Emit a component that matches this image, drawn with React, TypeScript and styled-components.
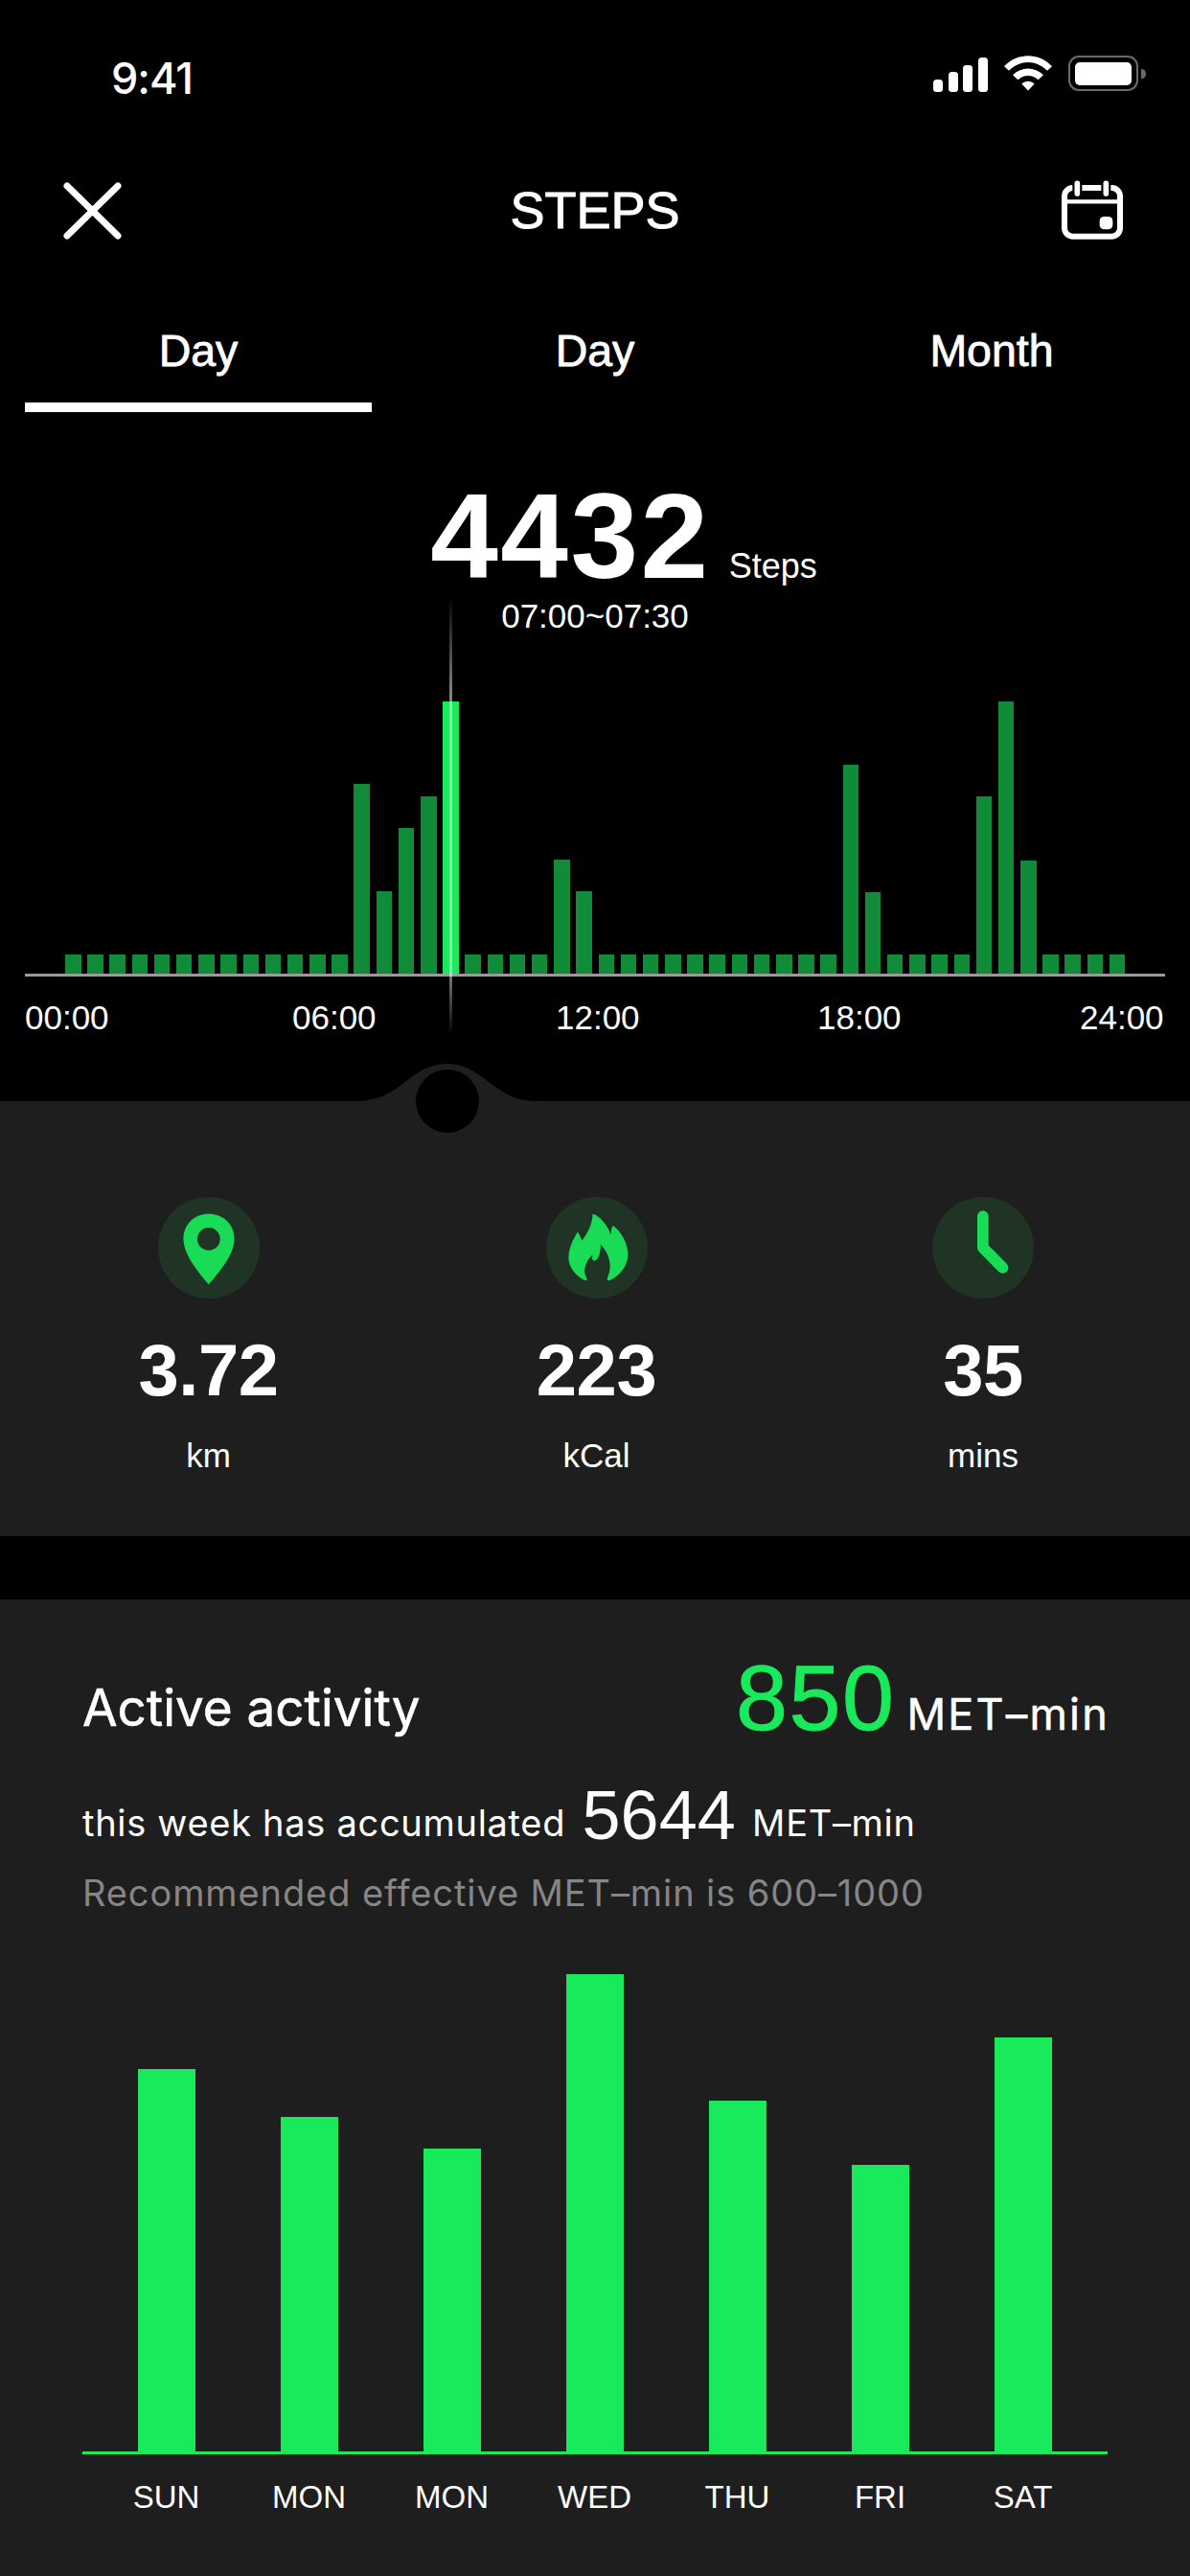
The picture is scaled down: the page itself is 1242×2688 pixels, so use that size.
import styled, { createGlobalStyle } from "styled-components";

const GREEN = "#18ea5b";
const ICON_GREEN = "#19db56";
const PANEL = "#1e1e1e";

// bar heights for the 48 half hour slots, everything else sits at the base height
const BASE_HEIGHT = 20;
const PEAKS: Record<number, number> = {
  13: 198,
  14: 86,
  15: 152,
  16: 185,
  17: 284,
  22: 119,
  23: 86,
  35: 218,
  36: 85,
  41: 185,
  42: 284,
  43: 118,
};
const SELECTED_SLOT = 17;
const daySlots = Array.from({ length: 48 }, (_, i) => PEAKS[i] ?? BASE_HEIGHT);

const weekDays = [
  { label: "SUN", height: 399 },
  { label: "MON", height: 349 },
  { label: "MON", height: 316 },
  { label: "WED", height: 498 },
  { label: "THU", height: 366 },
  { label: "FRI", height: 299 },
  { label: "SAT", height: 432 },
];

const GlobalStyle = createGlobalStyle`
  html, body {
    margin: 0;
    padding: 0;
    background: #000;
  }
  * {
    box-sizing: border-box;
  }
`;

const Screen = styled.div`
  width: 1242px;
  height: 2688px;
  overflow: hidden;
  background: #000;
  color: #fff;
  font-family: "Liberation Sans", Arial, sans-serif;
`;

const StatusBar = styled.div`
  height: 160px;
  padding: 58px 45px 0 116px;
  display: flex;
  justify-content: space-between;
  align-items: flex-start;
`;

const Clock = styled.span`
  font-family: Inter, sans-serif;
  font-size: 45px;
  font-weight: 500;
  line-height: 48px;
  letter-spacing: -1px;
`;

const StatusIcons = styled.div`
  display: flex;
  align-items: flex-start;
  gap: 17px;

  svg {
    display: block;
  }
`;

const Header = styled.header`
  height: 120px;
  padding: 0 71px;
  display: grid;
  grid-template-columns: 1fr auto 1fr;
  align-items: center;
`;

const CloseButton = styled.div`
  margin-left: -5px;
  display: flex;
`;

const CalendarButton = styled.div`
  justify-self: end;
  margin: 0 -2px 3px 0;
  display: flex;
`;

const Title = styled.h1`
  margin: 0 0 2px;
  font-size: 54px;
  font-weight: 400;
  line-height: 60px;
  -webkit-text-stroke: 1px #fff;
`;

const Tabs = styled.nav`
  display: grid;
  grid-template-columns: repeat(3, 414px);
  height: 150px;
`;

const Tab = styled.div`
  display: flex;
  flex-direction: column;
  align-items: center;
  justify-content: flex-end;
`;

const TabLabel = styled.span`
  font-size: 46.5px;
  line-height: 54px;
  -webkit-text-stroke: 0.8px #fff;
`;

const TabMark = styled.span<{ $active: boolean }>`
  width: 362px;
  height: 10px;
  margin-top: 27px;
  background: ${(p) => (p.$active ? "#fff" : "transparent")};
`;

const Summary = styled.section`
  margin-top: 64px;
  display: flex;
  flex-direction: column;
  align-items: center;
`;

const TotalRow = styled.div`
  padding-left: 60px;
  display: flex;
  align-items: baseline;
  gap: 19px;
`;

const Total = styled.span`
  font-size: 127px;
  font-weight: 700;
  line-height: 130px;
  letter-spacing: 2.5px;
`;

const TotalUnit = styled.span`
  font-size: 36px;
  line-height: 40px;
`;

const TimeRange = styled.span`
  margin-top: -1px;
  font-size: 35px;
  line-height: 40px;
`;

const DayChart = styled.section`
  position: relative;
  width: 1190px;
  margin: 69px 0 0 26px;
`;

const DayBars = styled.div`
  height: 287px;
  padding-left: 42px;
  display: flex;
  align-items: flex-end;
  gap: 6.7px;
  border-bottom: 3px solid #9a9a9a;
`;

const DayBar = styled.div<{ $selected: boolean }>`
  width: 16.5px;
  flex-shrink: 0;
  background: ${(p) => (p.$selected ? GREEN : "#108c38")};
`;

const Needle = styled.div`
  position: absolute;
  left: 443px;
  top: -110px;
  width: 3px;
  height: 458px;
  background: linear-gradient(
    to bottom,
    rgba(255, 255, 255, 0) 0%,
    rgba(255, 255, 255, 0.5) 22%,
    rgba(255, 255, 255, 0.55) 78%,
    rgba(255, 255, 255, 0.45) 87%,
    rgba(255, 255, 255, 0) 100%
  );
`;

const AxisLabels = styled.div`
  margin-top: 23px;
  display: grid;
  grid-template-columns: 279px 275px 273px 274px auto;
  font-size: 35px;
  line-height: 40px;
`;

const StatsPanel = styled.section`
  position: relative;
  margin-top: 67px;
  height: 454px;
  padding: 100px 0 0 15px;
  display: grid;
  grid-template-columns: 405px 405px 402px;
  background: ${PANEL};
`;

const Notch = styled.svg`
  position: absolute;
  left: 373px;
  top: -39px;
  display: block;
`;

const Stat = styled.div`
  display: flex;
  flex-direction: column;
  align-items: center;
`;

const StatIcon = styled.div`
  width: 106px;
  height: 106px;
  border-radius: 50%;
  background: #1f3424;

  svg {
    display: block;
  }
`;

const StatValue = styled.div`
  margin-top: 35px;
  font-size: 76px;
  font-weight: 700;
  line-height: 80px;
  letter-spacing: -0.5px;
`;

const StatUnit = styled.div`
  margin-top: 29px;
  font-size: 35px;
  line-height: 40px;
`;

const ActivityPanel = styled.section`
  margin-top: 66px;
  height: 1020px;
  padding: 53px 86px 0;
  background: ${PANEL};
`;

const ActivityHead = styled.div`
  display: flex;
  justify-content: space-between;
  align-items: baseline;
`;

const ActivityTitle = styled.h2`
  align-self: flex-start;
  margin: 28px 0 0;
  font-family: Inter, sans-serif;
  font-size: 53px;
  font-weight: 400;
  line-height: 64px;
  -webkit-text-stroke: 0.6px #fff;
`;

const ActiveValue = styled.div`
  margin-right: -2px;
  display: flex;
  align-items: baseline;
  gap: 12px;
  font-family: Inter, sans-serif;
  font-size: 45px;
  letter-spacing: 2.2px;
  -webkit-text-stroke: 0.5px #fff;
`;

const ActiveNumber = styled.span`
  font-family: "Liberation Sans", Arial, sans-serif;
  font-size: 97px;
  line-height: 100px;
  letter-spacing: 1.5px;
  color: ${GREEN};
  -webkit-text-stroke: 1px ${GREEN};
`;

const WeekLine = styled.p`
  margin: 34px 0 0;
  font-family: Inter, sans-serif;
  font-size: 38px;
  line-height: 76px;
  letter-spacing: 0.7px;
  white-space: nowrap;
`;

const WeekNumber = styled.span`
  margin: 0 6px;
  font-family: "Liberation Sans", Arial, sans-serif;
  font-size: 72px;
  letter-spacing: 0;
  vertical-align: -3px;
`;

const Hint = styled.p`
  margin: 11px 0 0;
  font-family: Inter, sans-serif;
  font-size: 38px;
  line-height: 48px;
  letter-spacing: 0.9px;
  color: #868686;
  white-space: nowrap;
`;

const WeekBars = styled.div`
  margin-top: 61px;
  height: 501px;
  padding-left: 13px;
  display: grid;
  grid-template-columns: repeat(7, 149px);
  align-items: end;
  justify-items: center;
  border-bottom: 3px solid ${GREEN};
`;

const WeekBar = styled.div<{ $height: number }>`
  width: 60px;
  height: ${(p) => p.$height}px;
  background: ${GREEN};
`;

const WeekLabels = styled.div`
  margin-top: 25px;
  padding-left: 13px;
  display: grid;
  grid-template-columns: repeat(7, 149px);
  justify-items: center;
  font-size: 33px;
  line-height: 40px;
`;

function StatusGlyphs() {
  return (
    <StatusIcons>
      <svg width="57" height="37" viewBox="0 0 57 37" fill="#fff" style={{ marginTop: 2 }}>
        <rect x="0" y="23" width="10" height="13" rx="3.5" />
        <rect x="16" y="15" width="10" height="21" rx="3.5" />
        <rect x="31" y="8" width="10" height="28" rx="3.5" />
        <rect x="47" y="0" width="10" height="36" rx="3.5" />
      </svg>
      <svg width="50" height="37" viewBox="0 0 150 110" fill="#fff">
        <path d="M0 33C40-11 110-11 150 33L135 47C100 12 50 12 15 47Z" />
        <path d="M27 60C55 33 95 33 123 60L107 75C88 58 62 58 43 75Z" />
        <path d="M55 88C68 77 82 77 95 88L75 109Z" />
      </svg>
      <svg width="82" height="38" viewBox="0 0 82 38">
        <rect x="1" y="1" width="71" height="35" rx="10" fill="none" stroke="#6a6a6a" strokeWidth="2" />
        <rect x="7" y="7" width="59" height="24" rx="5" fill="#fff" />
        <path d="M76 14c3 0 5 2 5 5s-2 5-5 5z" fill="#6a6a6a" />
      </svg>
    </StatusIcons>
  );
}

function CloseIcon() {
  return (
    <svg width="62" height="60" viewBox="0 0 62 60" fill="none" stroke="#fff" strokeWidth="7" strokeLinecap="round">
      <path d="M4 4l53 52M57 4L4 56" />
    </svg>
  );
}

function CalendarIcon() {
  return (
    <svg width="66" height="63" viewBox="50 33 198 189" fill="none">
      <rect x="62" y="60" width="174" height="152" rx="26" stroke="#fff" strokeWidth="18" />
      <path d="M62 103H236" stroke="#fff" strokeWidth="13" />
      <path d="M102 46V78M192 46V78" stroke="#000" strokeWidth="30" strokeLinecap="round" />
      <path d="M102 46V78M192 46V78" stroke="#fff" strokeWidth="17" strokeLinecap="round" />
      <rect x="172" y="150" width="41" height="40" rx="14" fill="#fff" />
    </svg>
  );
}

function PinIcon() {
  return (
    <svg width="106" height="106" viewBox="45 42 317 317">
      <path
        fill={ICON_GREEN}
        fillRule="evenodd"
        d="M203 94C159 94 124 128 124 172C124 222 170 276 203 315C236 276 283 222 283 172C283 128 247 94 203 94ZM203 138A35.500 35.500 0 1 1 203 209A35.500 35.500 0 1 1 203 138Z"
      />
    </svg>
  );
}

function FlameIcon() {
  return (
    <svg width="106" height="106" viewBox="45 42 317 317">
      <path
        fill={ICON_GREEN}
        d="M190 95C205 96 235 125 247 160C248 145 250 135 254 132C280 150 302 190 300 225C298 265 265 295 240 303C235 303 235 297 237 292C250 265 248 225 215 190C216 210 210 238 195 241C188 241 188 230 190 222C175 235 160 260 167 285C170 293 176 303 170 303C145 295 115 265 115 232C115 205 128 175 143 152C148 155 152 168 157 178C175 155 190 125 190 95Z"
      />
    </svg>
  );
}

function TimeIcon() {
  return (
    <svg width="106" height="106" viewBox="41 42 317 317" fill="none">
      <path d="M199 102V200L261 263" stroke={ICON_GREEN} strokeWidth="35" strokeLinecap="round" strokeLinejoin="round" />
    </svg>
  );
}

export default function App() {
  return (
    <Screen>
      <GlobalStyle />
      <StatusBar>
        <Clock>9:41</Clock>
        <StatusGlyphs />
      </StatusBar>

      <Header>
        <CloseButton>
          <CloseIcon />
        </CloseButton>
        <Title>STEPS</Title>
        <CalendarButton>
          <CalendarIcon />
        </CalendarButton>
      </Header>

      <Tabs>
        <Tab>
          <TabLabel>Day</TabLabel>
          <TabMark $active />
        </Tab>
        <Tab>
          <TabLabel>Day</TabLabel>
          <TabMark $active={false} />
        </Tab>
        <Tab>
          <TabLabel>Month</TabLabel>
          <TabMark $active={false} />
        </Tab>
      </Tabs>

      <Summary>
        <TotalRow>
          <Total>4432</Total>
          <TotalUnit>Steps</TotalUnit>
        </TotalRow>
        <TimeRange>07:00~07:30</TimeRange>
      </Summary>

      <DayChart>
        <DayBars>
          {daySlots.map((h, i) => (
            <DayBar key={i} $selected={i === SELECTED_SLOT} style={{ height: h }} />
          ))}
        </DayBars>
        <Needle />
        <AxisLabels>
          <span>00:00</span>
          <span>06:00</span>
          <span>12:00</span>
          <span>18:00</span>
          <span>24:00</span>
        </AxisLabels>
      </DayChart>

      <StatsPanel>
        <Notch width="187" height="72" viewBox="0 0 187 72">
          <path d="M0 39C45 39 55 0 93.500 0C132 0 142 39 187 39V72H0Z" fill={PANEL} />
          <circle cx="94" cy="39" r="33" fill="#000" />
        </Notch>
        <Stat>
          <StatIcon>
            <PinIcon />
          </StatIcon>
          <StatValue>3.72</StatValue>
          <StatUnit>km</StatUnit>
        </Stat>
        <Stat>
          <StatIcon>
            <FlameIcon />
          </StatIcon>
          <StatValue>223</StatValue>
          <StatUnit>kCal</StatUnit>
        </Stat>
        <Stat>
          <StatIcon>
            <TimeIcon />
          </StatIcon>
          <StatValue>35</StatValue>
          <StatUnit>mins</StatUnit>
        </Stat>
      </StatsPanel>

      <ActivityPanel>
        <ActivityHead>
          <ActivityTitle>Active activity</ActivityTitle>
          <ActiveValue>
            <ActiveNumber>850</ActiveNumber>
            <span>MET–min</span>
          </ActiveValue>
        </ActivityHead>
        <WeekLine>
          this week has accumulated <WeekNumber>5644</WeekNumber> MET–min
        </WeekLine>
        <Hint>Recommended effective MET–min is 600–1000</Hint>
        <WeekBars>
          {weekDays.map((d, i) => (
            <WeekBar key={i} $height={d.height} />
          ))}
        </WeekBars>
        <WeekLabels>
          {weekDays.map((d, i) => (
            <span key={i}>{d.label}</span>
          ))}
        </WeekLabels>
      </ActivityPanel>
    </Screen>
  );
}
